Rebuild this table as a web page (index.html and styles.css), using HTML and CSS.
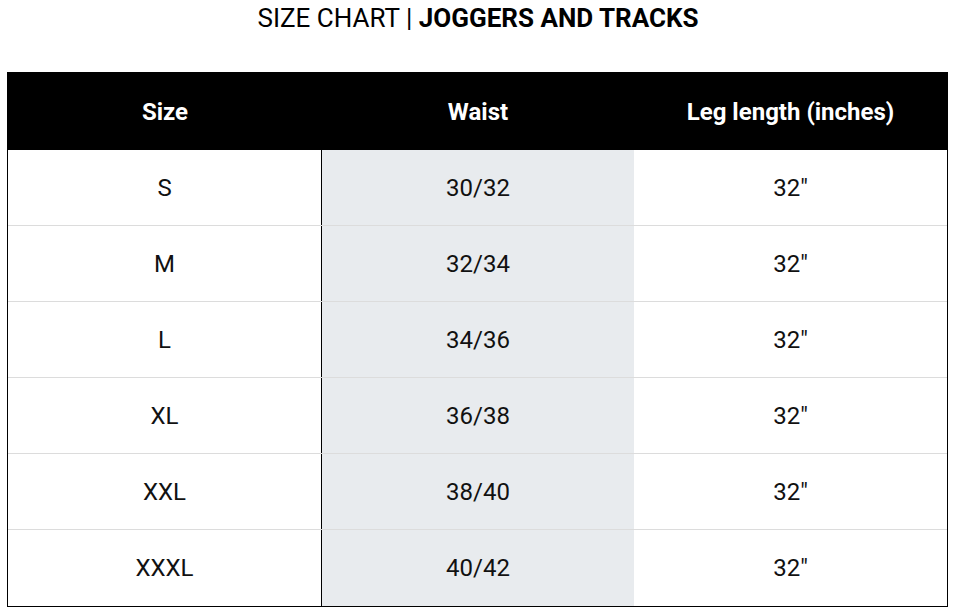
FILE: index.html
```html
<!DOCTYPE html>
<html lang="en">
<head>
<meta charset="utf-8">
<title>Size Chart</title>
<link rel="stylesheet" href="styles.css">
</head>
<body>
<h1 class="title">SIZE CHART | <strong>JOGGERS AND TRACKS</strong></h1>
<div class="chart">
  <div class="row head">
    <div class="cell">Size</div>
    <div class="cell">Waist</div>
    <div class="cell">Leg length (inches)</div>
  </div>
  <div class="row"><div class="cell c1">S</div><div class="cell c2">30/32</div><div class="cell c3">32"</div></div>
  <div class="row"><div class="cell c1">M</div><div class="cell c2">32/34</div><div class="cell c3">32"</div></div>
  <div class="row"><div class="cell c1">L</div><div class="cell c2">34/36</div><div class="cell c3">32"</div></div>
  <div class="row"><div class="cell c1">XL</div><div class="cell c2">36/38</div><div class="cell c3">32"</div></div>
  <div class="row"><div class="cell c1">XXL</div><div class="cell c2">38/40</div><div class="cell c3">32"</div></div>
  <div class="row"><div class="cell c1">XXXL</div><div class="cell c2">40/42</div><div class="cell c3">32"</div></div>
</div>
</body>
</html>
```
FILE: styles.css
```css
* { box-sizing: border-box; }
html, body { margin: 0; padding: 0; background: #fff; }
body {
  font-family: Roboto, "Liberation Sans", Arial, sans-serif;
  color: #111;
}
.title {
  margin: 0;
  padding-top: 3px;
  height: 72px;
  text-align: center;
  font-size: 26px;
  font-weight: 400;
  line-height: 31px;
  color: #000;
}
.title strong { font-weight: 700; }
.chart {
  width: 941px;
  margin-left: 7px;
  border: 1px solid #000;
}
.row {
  display: grid;
  grid-template-columns: 314px 312px 313px;
  height: 76px;
  border-bottom: 1px solid #dcdcdc;
}
.row:last-child { border-bottom: none; }
.row.head {
  height: 77px;
  background: #000;
  border-bottom: none;
}
.cell {
  display: flex;
  align-items: center;
  justify-content: center;
  font-size: 24px;
}
.head .cell {
  color: #fff;
  font-weight: 700;
  font-size: 24px;
}
.c1 { border-right: 1px solid #000; }
.c2 { background: #e8ebee; }
```
